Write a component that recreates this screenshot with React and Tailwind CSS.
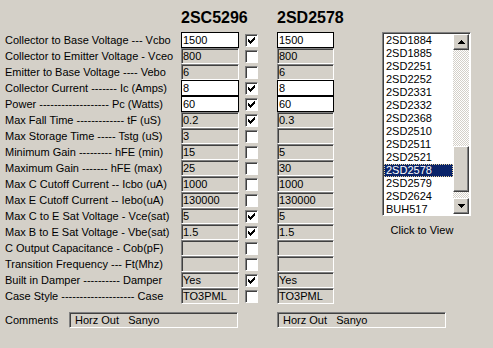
import React from "react";

const lbl = (p, n, s) => `${p} ${"-".repeat(n)} ${s}`;

const rows = [
  { l: lbl("Collector to Base Voltage", 3, "Vcbo"), a: "1500", b: "1500", w: true, c: true },
  { l: "Collector to Emitter Voltage - Vceo", a: "800", b: "800" },
  { l: lbl("Emitter to Base Voltage", 4, "Vebo"), a: "6", b: "6" },
  { l: lbl("Collector Current", 7, "Ic (Amps)"), a: "8", b: "8", w: true, c: true },
  { l: lbl("Power", 19, "Pc (Watts)"), a: "60", b: "60", w: true, c: true },
  { l: lbl("Max Fall Time", 13, "tF (uS)"), a: "0.2", b: "0.3", c: true },
  { l: lbl("Max Storage Time", 5, "Tstg (uS)"), a: "3", b: "" },
  { l: lbl("Minimum Gain", 9, "hFE (min)"), a: "15", b: "5" },
  { l: lbl("Maximum Gain", 7, "hFE (max)"), a: "25", b: "30" },
  { l: lbl("Max C Cutoff Current", 2, "Icbo (uA)"), a: "1000", b: "1000" },
  { l: lbl("Max E Cutoff Current", 2, "Iebo(uA)"), a: "130000", b: "130000" },
  { l: "Max C to E Sat Voltage - Vce(sat)", a: "5", b: "5", c: true },
  { l: "Max B to E Sat Voltage - Vbe(sat)", a: "1.5", b: "1.5", c: true },
  { l: lbl("C Output Capacitance", 1, "Cob(pF)"), a: "", b: "" },
  { l: lbl("Transition Frequency", 3, "Ft(Mhz)"), a: "", b: "" },
  { l: lbl("Built in Damper", 10, "Damper"), a: "Yes", b: "Yes", c: true },
  { l: lbl("Case Style", 20, "Case"), a: "TO3PML", b: "TO3PML" },
];

const items = [
  "2SD1884", "2SD1885", "2SD2251", "2SD2252", "2SD2331", "2SD2332", "2SD2368",
  "2SD2510", "2SD2511", "2SD2521", "2SD2578", "2SD2579", "2SD2624", "BUH517",
];

const sunken =
  "border-t border-l border-r border-b border-t-[#808080] border-l-[#808080] border-r-white border-b-white shadow-[inset_1px_1px_0_#404040]";
const raised =
  "border-t border-l border-r border-b border-t-white border-l-white border-r-[#404040] border-b-[#404040] shadow-[inset_-1px_-1px_0_#808080]";

function Field({ value, white, wide }) {
  const w = wide ? "w-[58px]" : "w-[57px]";
  if (white) {
    return (
      <div className={`${w} h-4 border border-black bg-white flex items-center pl-px overflow-hidden whitespace-nowrap`}>
        <span className="leading-3">{value}</span>
      </div>
    );
  }
  return (
    <div className={`${w} h-4 ${sunken} flex items-center pl-px overflow-hidden whitespace-nowrap`}>
      <span className="leading-3">{value}</span>
    </div>
  );
}

function Check({ on }) {
  const ys = [2, 3, 4, 3, 2, 1, 0];
  return (
    <div className={`w-[13px] h-[13px] ${sunken} bg-white flex items-center justify-center`}>
      {on && (
        <svg width="7" height="7" viewBox="0 0 7 7" shapeRendering="crispEdges">
          {ys.map((y, i) => (
            <rect key={i} x={i} y={y} width="1" height="3" fill="#000" />
          ))}
        </svg>
      )}
    </div>
  );
}

function Arrow({ down }) {
  return (
    <svg width="7" height="4" viewBox="0 0 7 4" shapeRendering="crispEdges" className={down ? "rotate-180" : ""}>
      <rect x="3" y="0" width="1" height="1" fill="#000" />
      <rect x="2" y="1" width="3" height="1" fill="#000" />
      <rect x="1" y="2" width="5" height="1" fill="#000" />
      <rect x="0" y="3" width="7" height="1" fill="#000" />
    </svg>
  );
}

const checker =
  "bg-[image:repeating-conic-gradient(#d4d0c8_0%_25%,#ffffff_0%_50%)] bg-[length:2px_2px]";

export default function App() {
  return (
    <div className="w-[493px] h-[348px] bg-[#d4d0c8] overflow-hidden text-[11px] text-black font-['Liberation_Sans',Arial,sans-serif]">
      <div className="flex">
        <div className="w-[382px]">
          <div className="h-8 flex pt-[9px] text-[16px] font-bold leading-[18px]">
            <div className="w-[181px]" />
            <div className="w-[96px]">2SC5296</div>
            <div>2SD2578</div>
          </div>
          {rows.map((r, i) => (
            <div key={i} className="h-4 flex items-center">
              <div className="w-[181px] pl-[5px] leading-4 whitespace-nowrap">{r.l}</div>
              <Field value={r.a} white={r.w} wide />
              <div className="ml-[6px]">
                <Check on={r.c} />
              </div>
              <div className="ml-[19px]">
                <Field value={r.b} white={r.w} />
              </div>
            </div>
          ))}
        </div>
        <div className="pt-8 flex flex-col">
          <div className={`w-[89px] h-[184px] flex p-px bg-white ${sunken} shadow-[inset_1px_1px_0_#404040,inset_-1px_-1px_0_#d4d0c8]`}>
            <div className="flex-1 bg-white overflow-hidden">
              {items.map((it) =>
                it === "2SD2578" ? (
                  <div
                    key={it}
                    className="h-[13px] leading-[11px] pl-px bg-[#0a246a] text-white border border-dotted border-[#e8d49a] whitespace-nowrap"
                  >
                    {it}
                  </div>
                ) : (
                  <div key={it} className="h-[13px] leading-[13px] pl-[2px] whitespace-nowrap">
                    {it}
                  </div>
                )
              )}
            </div>
            <div className="w-4 flex flex-col">
              <div className={`h-4 bg-[#d4d0c8] ${raised} flex items-center justify-center`}>
                <Arrow />
              </div>
              <div className={`h-[96px] ${checker}`} />
              <div className={`h-[46px] bg-[#d4d0c8] ${raised}`} />
              <div className={`flex-1 ${checker}`} />
              <div className={`h-4 bg-[#d4d0c8] ${raised} flex items-center justify-center`}>
                <Arrow down />
              </div>
            </div>
          </div>
          <div className="mt-[6px] leading-4 text-center pr-[9px]">Click to View</div>
        </div>
      </div>
      <div className="mt-2 flex h-4 items-center">
        <div className="w-[69px] pl-[5px] leading-4">Comments</div>
        <div className={`w-[169px] h-4 ${sunken} flex items-center pl-[5px] whitespace-pre`}>
          <span className="leading-3">Horz Out   Sanyo</span>
        </div>
        <div className={`ml-[39px] w-[169px] h-4 ${sunken} flex items-center pl-[5px] whitespace-pre`}>
          <span className="leading-3">Horz Out   Sanyo</span>
        </div>
      </div>
    </div>
  );
}
